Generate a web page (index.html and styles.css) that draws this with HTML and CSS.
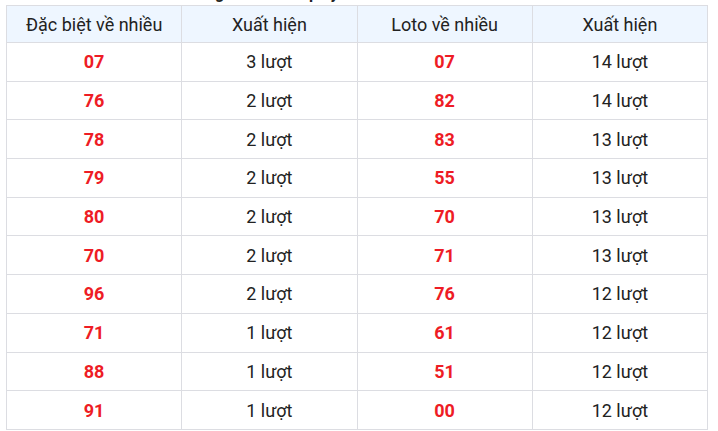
FILE: index.html
```html
<!DOCTYPE html>
<html lang="vi">
<head>
<meta charset="utf-8">
<link rel="stylesheet" href="styles.css">
</head>
<body>
<div class="wrap">
  <div class="caption">Thống kê các lần quay</div>
  <table class="stats">
    <thead>
      <tr><th>Đặc biệt về nhiều</th><th>Xuất hiện</th><th>Loto về nhiều</th><th>Xuất hiện</th></tr>
    </thead>
    <tbody>
      <tr><td class="num">07</td><td>3 lượt</td><td class="num">07</td><td>14 lượt</td></tr>
      <tr><td class="num">76</td><td>2 lượt</td><td class="num">82</td><td>14 lượt</td></tr>
      <tr><td class="num">78</td><td>2 lượt</td><td class="num">83</td><td>13 lượt</td></tr>
      <tr><td class="num">79</td><td>2 lượt</td><td class="num">55</td><td>13 lượt</td></tr>
      <tr><td class="num">80</td><td>2 lượt</td><td class="num">70</td><td>13 lượt</td></tr>
      <tr><td class="num">70</td><td>2 lượt</td><td class="num">71</td><td>13 lượt</td></tr>
      <tr><td class="num">96</td><td>2 lượt</td><td class="num">76</td><td>12 lượt</td></tr>
      <tr><td class="num">71</td><td>1 lượt</td><td class="num">61</td><td>12 lượt</td></tr>
      <tr><td class="num">88</td><td>1 lượt</td><td class="num">51</td><td>12 lượt</td></tr>
      <tr><td class="num">91</td><td>1 lượt</td><td class="num">00</td><td>12 lượt</td></tr>
    </tbody>
  </table>
</div>
</body>
</html>
```
FILE: styles.css
```css
html, body {
  margin: 0;
  padding: 0;
  background: #ffffff;
}
body {
  font-family: Roboto, "Noto Sans", Arial, sans-serif;
  color: #222222;
}
.wrap {
  padding: 0 10px 0 6px;
}
.caption {
  margin-top: -14px;
  height: 19px;
  line-height: 15px;
  padding-left: 172px;
  font-size: 16px;
  font-weight: 700;
  text-align: left;
  color: #222;
  white-space: nowrap;
  overflow: hidden;
}
.stats {
  width: 702px;
  border-collapse: collapse;
  table-layout: fixed;
  font-size: 18px;
}
.stats th,
.stats td {
  border: 1px solid #dcdde2;
  text-align: center;
  vertical-align: middle;
  padding: 0;
}
.stats th {
  background: #eef6ff;
  font-weight: 400;
  height: 36px;
  color: #222;
}
.stats td {
  height: 37.7px;
}
.stats td.num {
  color: #ee1c25;
  font-weight: 700;
}
```
